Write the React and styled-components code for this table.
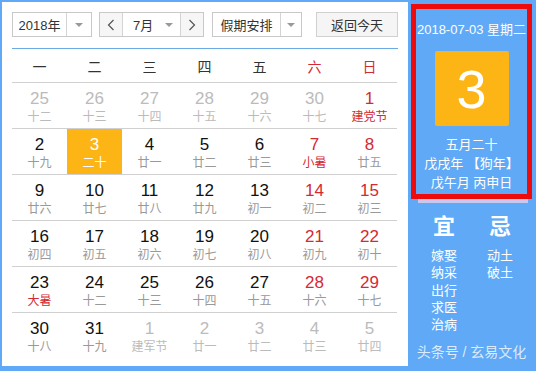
import React from "react";
import styled, { createGlobalStyle } from "styled-components";

const Global = createGlobalStyle`
  html, body { margin: 0; padding: 0; background: #5fa9f6; }
  body { font-family: "Liberation Sans", "Noto Sans CJK SC", sans-serif; }
`;

const Frame = styled.div`
  width: 536px;
  height: 371px;
  box-sizing: border-box;
  background: #5fa9f6;
  padding: 2px 0 5px 2px;
  display: flex;
  overflow: hidden;
`;

const Left = styled.div`
  width: 406px;
  height: 364px;
  box-sizing: border-box;
  background: #fff;
  padding: 10px 10px 0 10px;
  display: flex;
  flex-direction: column;
`;

const Toolbar = styled.div`
  display: flex;
  height: 25px;
  align-items: stretch;
`;

const Select = styled.div`
  width: ${(p) => p.w}px;
  margin-right: ${(p) => p.mr || 0}px;
  box-sizing: border-box;
  border: 1px solid #c8c8c8;
  display: flex;
  background: #fff;
  font-size: 13px;
  color: #333;
`;

const SelectText = styled.div`
  flex: 1;
  display: flex;
  align-items: center;
  justify-content: center;
  border-right: 1px solid #d4d4d4;
`;

const Arrow = styled.div`
  width: ${(p) => p.w || 24}px;
  display: flex;
  align-items: center;
  justify-content: center;
  &::after {
    content: "";
    border-left: 4px solid transparent;
    border-right: 4px solid transparent;
    border-top: 4px solid #999;
  }
`;

const NavBtn = styled.div`
  width: ${(p) => p.w}px;
  display: flex;
  align-items: center;
  justify-content: center;
  background: #f6f6f6;
  ${(p) => (p.left ? "border-right: 1px solid #d4d4d4;" : "border-left: 1px solid #d4d4d4;")}
`;

const MonthText = styled.div`
  flex: 1;
  display: flex;
  align-items: center;
  padding-left: 10px;
`;

const TodayBtn = styled.div`
  width: 82px;
  margin-left: auto;
  box-sizing: border-box;
  border: 1px solid #d0d0d0;
  background: #f5f5f5;
  font-size: 13px;
  color: #333;
  display: flex;
  align-items: center;
  justify-content: center;
`;

const Grid = styled.div`
  margin-top: 11px;
  border-top: 1px solid #6aabe6;
  display: grid;
  grid-template-columns: repeat(7, 55px);
`;

const Head = styled.div`
  height: 33px;
  border-bottom: 1px solid #d0d0d0;
  display: flex;
  align-items: center;
  justify-content: center;
  font-size: 14px;
  color: ${(p) => (p.red ? "#d42a33" : "#333")};
`;

const Cell = styled.div`
  height: ${(p) => (p.last ? 46 : 45)}px;
  border-bottom: ${(p) => (p.last ? "none" : "1px solid #d0d0d0")};
  background: ${(p) => (p.sel ? "#fcb514" : "transparent")};
  display: flex;
  flex-direction: column;
  align-items: center;
`;

const Num = styled.div`
  margin-top: 6px;
  height: 20px;
  line-height: 20px;
  font-size: 17px;
  color: ${(p) => p.c};
`;

const Lunar = styled.div`
  margin-top: 0px;
  height: 16px;
  line-height: 16px;
  font-size: 12px;
  color: ${(p) => p.c};
`;

const Right = styled.div`
  flex: 1;
  display: flex;
  flex-direction: column;
  padding: 2px 4px 0 3px;
`;

const RedBox = styled.div`
  height: 195px;
  box-sizing: border-box;
  border: 5px solid #ee0b0b;
  display: flex;
  flex-direction: column;
  align-items: center;
  color: #fff;
`;

const DateLine = styled.div`
  margin-top: 10px;
  font-size: 13px;
  white-space: nowrap;
`;

const BigDay = styled.div`
  margin-top: 13px;
  width: 74px;
  height: 75px;
  background: #fcb514;
  border-radius: 2px;
  display: flex;
  align-items: center;
  justify-content: center;
  font-size: 54px;
  line-height: 1;
  color: #fff;
`;

const LunarLine = styled.div`
  font-size: 13px;
  line-height: 19px;
  white-space: nowrap;
  margin-top: ${(p) => p.mt || 0}px;
`;

const Strip = styled.div`
  height: 4px;
  margin: 0 4px 0 7px;
  background: #c6c8ee;
`;

const YiJi = styled.div`
  display: flex;
  justify-content: center;
  gap: 30px;
  margin-top: 10px;
  padding-left: 1px;
`;

const Col = styled.div`
  display: flex;
  flex-direction: column;
  align-items: center;
  width: 26px;
  color: #fff;
`;

const Big = styled.div`
  font-size: 22px;
  font-weight: bold;
  line-height: 28px;
  margin-bottom: 6px;
`;

const Item = styled.div`
  font-size: 13px;
  line-height: 17.3px;
  white-space: nowrap;
`;

const Footer = styled.div`
  margin-top: auto;
  margin-bottom: 5px;
  font-size: 14px;
  color: rgba(255, 255, 255, 0.78);
  white-space: nowrap;
  text-align: center;
`;

const RED = "#d42a33";
const BLACK = "#111";
const GREY = "#bbb";
const LGREY = "#999";

// [num, lunar, type] type: o=other month, r=red num, f=red lunar festival, s=selected
const rows = [
  [["25", "十二", "o"], ["26", "十三", "o"], ["27", "十四", "o"], ["28", "十五", "o"], ["29", "十六", "o"], ["30", "十七", "o"], ["1", "建党节", "rf"]],
  [["2", "十九"], ["3", "二十", "s"], ["4", "廿一"], ["5", "廿二"], ["6", "廿三"], ["7", "小暑", "rf"], ["8", "廿五", "r"]],
  [["9", "廿六"], ["10", "廿七"], ["11", "廿八"], ["12", "廿九"], ["13", "初一"], ["14", "初二", "r"], ["15", "初三", "r"]],
  [["16", "初四"], ["17", "初五"], ["18", "初六"], ["19", "初七"], ["20", "初八"], ["21", "初九", "r"], ["22", "初十", "r"]],
  [["23", "大暑", "f"], ["24", "十二"], ["25", "十三"], ["26", "十四"], ["27", "十五"], ["28", "十六", "r"], ["29", "十七", "r"]],
  [["30", "十八"], ["31", "十九"], ["1", "建军节", "o"], ["2", "廿一", "o"], ["3", "廿二", "o"], ["4", "廿三", "o"], ["5", "廿四", "o"]],
];

const heads = ["一", "二", "三", "四", "五", "六", "日"];

function Chevron({ dir }) {
  return (
    <svg width="8" height="12" viewBox="0 0 8 12">
      <path
        d={dir === "left" ? "M6.5 1 L1.5 6 L6.5 11" : "M1.5 1 L6.5 6 L1.5 11"}
        fill="none"
        stroke="#555"
        strokeWidth="1.2"
      />
    </svg>
  );
}

export default function App() {
  return (
    <>
      <Global />
      <Frame>
        <Left>
          <Toolbar>
            <Select w={80} mr={7}>
              <SelectText>2018年</SelectText>
              <Arrow />
            </Select>
            <Select w={105} mr={8}>
              <NavBtn w={22} left>
                <Chevron dir="left" />
              </NavBtn>
              <MonthText>7月</MonthText>
              <Arrow w={22} />
              <NavBtn w={22}>
                <Chevron dir="right" />
              </NavBtn>
            </Select>
            <Select w={90}>
              <SelectText>假期安排</SelectText>
              <Arrow w={20} />
            </Select>
            <TodayBtn>返回今天</TodayBtn>
          </Toolbar>
          <Grid>
            {heads.map((h, i) => (
              <Head key={h} red={i >= 5}>
                {h}
              </Head>
            ))}
            {rows.map((r, ri) =>
              r.map(([n, l, t = ""], ci) => {
                const other = t.includes("o");
                const sel = t.includes("s");
                const numC = sel ? "#fff" : other ? GREY : t.includes("r") ? RED : BLACK;
                const lunC = sel ? "#fff" : other ? GREY : t.includes("f") ? RED : LGREY;
                return (
                  <Cell key={`${ri}-${ci}`} sel={sel} last={ri === 5}>
                    <Num c={numC}>{n}</Num>
                    <Lunar c={lunC}>{l}</Lunar>
                  </Cell>
                );
              })
            )}
          </Grid>
        </Left>
        <Right>
          <RedBox>
            <DateLine>2018-07-03 星期二</DateLine>
            <BigDay>3</BigDay>
            <LunarLine mt={9}>五月二十</LunarLine>
            <LunarLine>戊戌年 【狗年】</LunarLine>
            <LunarLine>戊午月 丙申日</LunarLine>
          </RedBox>
          <Strip />
          <YiJi>
            <Col>
              <Big>宜</Big>
              <Item>嫁娶</Item>
              <Item>纳采</Item>
              <Item>出行</Item>
              <Item>求医</Item>
              <Item>治病</Item>
            </Col>
            <Col>
              <Big>忌</Big>
              <Item>动土</Item>
              <Item>破土</Item>
            </Col>
          </YiJi>
          <Footer>头条号 / 玄易文化</Footer>
        </Right>
      </Frame>
    </>
  );
}
